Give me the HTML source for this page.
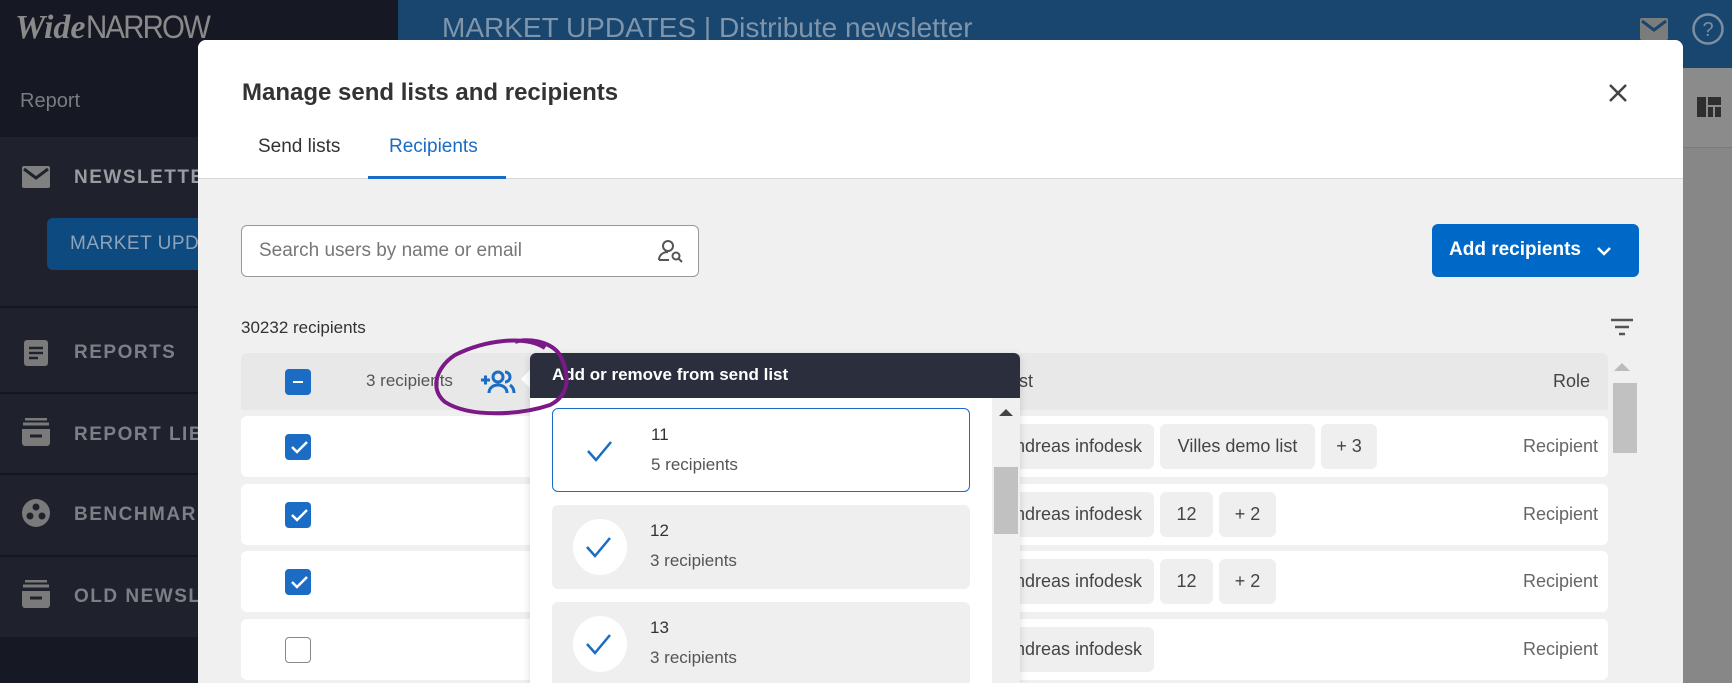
<!DOCTYPE html>
<html><head><meta charset="utf-8"><style>
*{box-sizing:border-box;margin:0;padding:0}
body{width:1732px;height:683px;overflow:hidden;position:relative;background:#161824;font-family:"Liberation Sans",sans-serif}
.a{position:absolute}
.side{left:0;top:0;width:398px;height:683px;background:#161824}
.navt{color:#7d7f86;font-weight:bold;font-size:19px;letter-spacing:1.5px}
.div{height:2px;background:#15171f;left:0;width:398px}
.chip{position:absolute;top:8px;height:45px;background:#efefef;border-radius:6px;font-size:18px;color:#444;line-height:45px;text-align:center}
.row{left:241px;width:1367px;height:61px;background:#fff;border-radius:6px}
.cb{left:44px;width:26px;height:26px;border-radius:4px;background:#1a6cc4}
.rec{right:10px;top:0;line-height:61px;font-size:18px;color:#666}
.item{left:22px;width:418px;height:84px;background:#efefef;border-radius:6px}
.circ{left:21px;top:14px;width:54px;height:56px;border-radius:50%;background:#fff}
.t1{left:98px;top:16px;font-size:17px;color:#333}
.t2{left:98px;top:46px;font-size:17px;color:#555}
</style></head><body>
<div class="a side">
 <div class="a" style="left:15px;top:8px;font-size:34px;color:#8a8a8a;white-space:nowrap"><span style="font-family:'Liberation Serif',serif;font-style:italic;font-weight:bold">Wide</span><span style="font-size:32px;letter-spacing:-2px;display:inline-block;transform:scaleX(.92);transform-origin:left">NARROW</span></div>
 <div class="a" style="left:20px;top:90px;font-size:20px;color:#7a7c82">Report</div>
 <div class="a" style="left:0;top:137px;width:398px;height:500px;background:#1f222c"></div>
 <svg class="a" style="left:22px;top:166px" width="28" height="22"><rect width="28" height="22" rx="2" fill="#808080"/><path d="M2 3 L14 12 L26 3" stroke="#1f222c" stroke-width="3" fill="none"/></svg>
 <div class="a navt" style="left:74px;top:167px;color:#9a9ca2">NEWSLETTER</div>
 <div class="a" style="left:47px;top:218px;width:360px;height:52px;background:#0d4a80;border-radius:6px"></div>
 <div class="a" style="left:70px;top:233px;font-size:19px;color:#8fa3b8;letter-spacing:.5px">MARKET UPDATES</div>
 <div class="a div" style="top:306px"></div>
 <svg class="a" style="left:24px;top:340px" width="24" height="26"><rect width="24" height="26" rx="3" fill="#7a7a7a"/><path d="M5 8h14M5 13h14M5 18h9" stroke="#1f222c" stroke-width="2.5"/></svg>
 <div class="a navt" style="left:74px;top:342px">REPORTS</div>
 <div class="a div" style="top:392px"></div>
 <svg class="a" style="left:21px;top:418px" width="30" height="28"><path d="M4 1h22M2 6h26" stroke="#7a7a7a" stroke-width="3"/><path d="M1 11h28v14a3 3 0 0 1-3 3H4a3 3 0 0 1-3-3z" fill="#7a7a7a"/><path d="M9 18h12" stroke="#1f222c" stroke-width="3"/></svg>
 <div class="a navt" style="left:74px;top:424px">REPORT LIBRARY</div>
 <div class="a div" style="top:473px"></div>
 <svg class="a" style="left:22px;top:499px" width="28" height="28"><circle cx="14" cy="14" r="14" fill="#7a7a7a"/><circle cx="14" cy="8" r="3.5" fill="#1f222c"/><circle cx="8" cy="17" r="3.5" fill="#1f222c"/><circle cx="20" cy="17" r="3.5" fill="#1f222c"/></svg>
 <div class="a navt" style="left:74px;top:504px">BENCHMARKS</div>
 <div class="a div" style="top:555px"></div>
 <svg class="a" style="left:21px;top:580px" width="30" height="28"><path d="M4 1h22M2 6h26" stroke="#7a7a7a" stroke-width="3"/><path d="M1 11h28v14a3 3 0 0 1-3 3H4a3 3 0 0 1-3-3z" fill="#7a7a7a"/><path d="M9 18h12" stroke="#1f222c" stroke-width="3"/></svg>
 <div class="a navt" style="left:74px;top:586px">OLD NEWSLETTERS</div>
</div>
<div class="a" style="left:398px;top:0;width:1334px;height:68px;background:#18466e"></div>
<div class="a" style="left:442px;top:12px;font-size:28px;color:#7f95ab">MARKET UPDATES | Distribute newsletter</div>
<div class="a" style="left:398px;top:68px;width:1334px;height:615px;background:#878787"></div>
<div class="a" style="left:1683px;top:68px;width:49px;height:80px;background:#8b8b8b;border-bottom:1px solid #7a7a7a"></div>
<svg class="a" style="left:1640px;top:18px" width="28" height="22"><rect width="28" height="22" rx="2" fill="#7c7c7c"/><path d="M2 3 L14 12 L26 3" stroke="#18466e" stroke-width="3" fill="none"/></svg>
<svg class="a" style="left:1691px;top:12px" width="34" height="34"><circle cx="17" cy="17" r="14.5" stroke="#7c8ea2" stroke-width="2.5" fill="none"/><text x="17" y="24" text-anchor="middle" font-size="20" fill="#7c8ea2" font-family="Liberation Sans">?</text></svg>
<svg class="a" style="left:1697px;top:97px" width="24" height="20"><rect width="24" height="20" fill="#2e2e2e"/><path d="M10 0v20M10 9h14M17 9v11" stroke="#8b8b8b" stroke-width="2"/></svg>

<div class="a" style="left:198px;top:40px;width:1485px;height:643px;background:#f0f0f0;border-radius:8px 8px 0 0;overflow:hidden">
 <div class="a" style="left:0;top:0;width:1485px;height:139px;background:#fff;border-bottom:1px solid #d8d8d8"></div>
 <div class="a" style="left:44px;top:39px;font-size:24px;font-weight:bold;color:#333">Manage send lists and recipients</div>
 <svg class="a" style="left:1410px;top:43px" width="20" height="20"><path d="M2 2L18 18M18 2L2 18" stroke="#444" stroke-width="2.5"/></svg>
 <div class="a" style="left:60px;top:96px;font-size:19px;color:#333">Send lists</div>
 <div class="a" style="left:191px;top:96px;font-size:19px;color:#1a6cc4">Recipients</div>
 <div class="a" style="left:170px;top:136px;width:138px;height:3px;background:#1a6cc4"></div>
 <div class="a" style="left:43px;top:185px;width:458px;height:52px;background:#fff;border:1px solid #999;border-radius:6px"></div>
 <div class="a" style="left:61px;top:200px;font-size:19px;color:#777">Search users by name or email</div>
 <svg class="a" style="left:459px;top:198px" width="28" height="26"><circle cx="11" cy="8" r="5" stroke="#555" stroke-width="2" fill="none"/><path d="M2 22c0-5 4-8 9-8" stroke="#555" stroke-width="2" fill="none"/><path d="M2 22h10" stroke="#555" stroke-width="2"/><circle cx="19" cy="18" r="3.5" stroke="#555" stroke-width="2" fill="none"/><path d="M21.5 20.5L25 24" stroke="#555" stroke-width="2"/></svg>
 <div class="a" style="left:1234px;top:184px;width:207px;height:53px;background:#0069c8;border-radius:6px"></div>
 <div class="a" style="left:1251px;top:199px;font-size:19px;font-weight:bold;color:#fff">Add recipients</div>
 <svg class="a" style="left:1398px;top:205px" width="16" height="12"><path d="M2 3L8 9L14 3" stroke="#fff" stroke-width="2.5" fill="none"/></svg>
 <div class="a" style="left:43px;top:278px;font-size:17px;color:#333">30232 recipients</div>
 <svg class="a" style="left:1412px;top:278px" width="24" height="20"><path d="M1 2h22M5 9h14M9 16h6" stroke="#555" stroke-width="2.5"/></svg>
 <div class="a" style="left:43px;top:313px;width:1367px;height:57px;background:#e8e8e8;border-radius:6px 6px 0 0"></div>
 <div class="a" style="left:87px;top:329px;width:26px;height:26px;border-radius:4px;background:#1a6cc4"><div class="a" style="left:8px;top:12px;width:10px;height:2px;background:#fff"></div></div>
 <div class="a" style="left:168px;top:331px;font-size:17px;color:#555">3 recipients</div>
 <svg class="a" style="left:282px;top:329px" width="36" height="26"><path d="M1 11h9M5.5 6.5v9" stroke="#1a6cc4" stroke-width="3"/><circle cx="18" cy="8" r="5" stroke="#1a6cc4" stroke-width="3" fill="none"/><path d="M9 24c0-5 4-8 9-8s9 3 9 8" stroke="#1a6cc4" stroke-width="3" fill="none"/><path d="M25 3a5 5 0 0 1 0 10M30 16c3 2 4 5 4 8" stroke="#1a6cc4" stroke-width="3" fill="none"/></svg>
 <div class="a" style="left:766px;top:331px;font-size:18px;color:#444">Send list</div>
 <div class="a" style="left:1355px;top:331px;font-size:18px;color:#444">Role</div>
 <div class="a" style="left:1416px;top:323px;width:0;height:0;border-left:8px solid transparent;border-right:8px solid transparent;border-bottom:8px solid #bbb"></div>
 <div class="a" style="left:1415px;top:343px;width:24px;height:70px;background:#c1c1c1"></div>
</div>
<!-- rows -->
<div class="a row" style="top:416px"><div class="a cb" style="top:18px"></div><div class="chip" style="left:750px;width:163px">Andreas infodesk</div><div class="chip" style="left:919px;width:155px">Villes demo list</div><div class="chip" style="left:1080px;width:56px">+ 3</div><div class="a rec">Recipient</div></div>
<div class="a row" style="top:484px"><div class="a cb" style="top:18px"></div><div class="chip" style="left:750px;width:163px">Andreas infodesk</div><div class="chip" style="left:919px;width:53px">12</div><div class="chip" style="left:978px;width:57px">+ 2</div><div class="a rec">Recipient</div></div>
<div class="a row" style="top:551px"><div class="a cb" style="top:18px"></div><div class="chip" style="left:750px;width:163px">Andreas infodesk</div><div class="chip" style="left:919px;width:53px">12</div><div class="chip" style="left:978px;width:57px">+ 2</div><div class="a rec">Recipient</div></div>
<div class="a row" style="top:619px"><div class="a cb" style="top:18px;background:#fff;border:1px solid #888"></div><div class="chip" style="left:750px;width:163px">Andreas infodesk</div><div class="a rec">Recipient</div></div>
<svg class="a" style="left:284px;top:434px" width="32" height="200"><g stroke="#fff" stroke-width="2.5" fill="none"><path d="M8 13l5 5 10-10"/><path d="M8 81l5 5 10-10"/><path d="M8 148l5 5 10-10"/></g></svg>
<!-- popup -->
<div class="a" style="left:521px;top:370px;width:0;height:0;border-top:9px solid transparent;border-bottom:9px solid transparent;border-right:9px solid #fff"></div>
<div class="a" style="left:530px;top:353px;width:490px;height:330px;background:#fff;border-radius:6px 6px 0 0;overflow:hidden;box-shadow:0 2px 8px rgba(0,0,0,.15)">
 <div class="a" style="left:0;top:0;width:490px;height:45px;background:#2b2f3d"></div>
 <div class="a" style="left:22px;top:12px;font-size:17px;font-weight:bold;color:#fff">Add or remove from send list</div>
 <div class="a item" style="top:55px;background:#fff;border:1.5px solid #1a6cc4"><svg class="a" style="left:33px;top:30px" width="28" height="24"><path d="M2 12l8 9L25 3" stroke="#1a6cc4" stroke-width="2.5" fill="none"/></svg><div class="a t1">11</div><div class="a t2">5 recipients</div></div>
 <div class="a item" style="top:152px"><div class="a circ"></div><svg class="a" style="left:33px;top:30px" width="28" height="24"><path d="M2 12l8 9L25 3" stroke="#1a6cc4" stroke-width="2.5" fill="none"/></svg><div class="a t1">12</div><div class="a t2">3 recipients</div></div>
 <div class="a item" style="top:249px"><div class="a circ"></div><svg class="a" style="left:33px;top:30px" width="28" height="24"><path d="M2 12l8 9L25 3" stroke="#1a6cc4" stroke-width="2.5" fill="none"/></svg><div class="a t1">13</div><div class="a t2">3 recipients</div></div>
 <div class="a" style="left:462px;top:45px;width:28px;height:290px;background:#f0f0f0"></div>
 <div class="a" style="left:469px;top:56px;width:0;height:0;border-left:7px solid transparent;border-right:7px solid transparent;border-bottom:7px solid #444"></div>
 <div class="a" style="left:464px;top:114px;width:24px;height:67px;background:#c1c1c1"></div>
</div>
<svg class="a" style="left:425px;top:330px" width="150" height="95"><path d="M120 18C100 5 60 10 30 25C10 38 5 60 20 72C45 88 95 85 125 75C145 65 145 45 135 25C125 10 100 8 90 12" stroke="#7b1a86" stroke-width="4" fill="none"/></svg>
</body></html>
